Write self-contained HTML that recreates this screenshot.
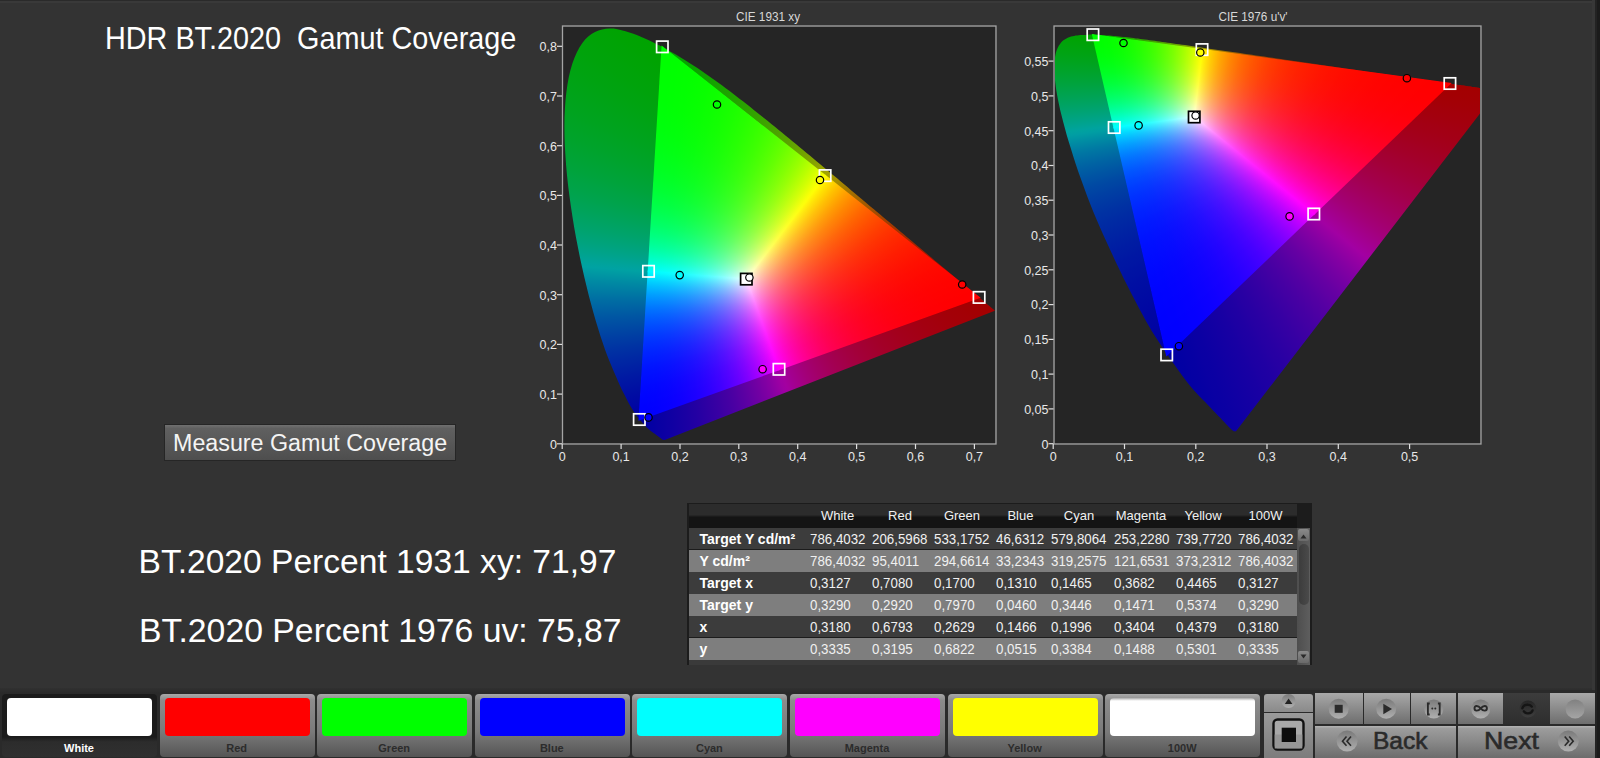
<!DOCTYPE html>
<html><head><meta charset="utf-8"><style>
html,body{margin:0;padding:0;}
body{width:1600px;height:758px;overflow:hidden;background:#333;position:relative;font-family:"Liberation Sans", sans-serif;}
.t{position:absolute;white-space:nowrap;line-height:1;}
.plot{position:absolute;overflow:hidden;background:#252525;}
.ly{position:absolute;left:0;top:0;right:0;bottom:0;}
.sb{background-blend-mode:screen;}
.ov{position:absolute;left:0;top:0;}
.btn{position:absolute;left:163.5px;top:423.5px;width:292px;height:37px;background:linear-gradient(#707070 0,#606060 10%,#585858 50%,#4e4e4e 100%);border:1px solid #262626;box-sizing:border-box;}
.tbl{position:absolute;left:687px;top:503px;width:625px;height:162px;background:#1c1c1c;}
.thead{position:absolute;left:689px;top:504px;width:608px;height:24px;background:linear-gradient(#2c2c2c 0,#2c2c2c 45%,#141414 55%,#141414 100%);}
.row{position:absolute;left:689px;width:608px;}
.sbar{position:absolute;left:1297px;top:528px;width:13px;height:137px;background:linear-gradient(90deg,#4e4e4e,#5e5e5e);}
.sbtn{position:absolute;left:1298px;width:11px;height:12px;border-radius:2px;background:linear-gradient(#8a8a8a,#6a6a6a);}
.sthumb{position:absolute;left:1298.5px;top:544px;width:10px;height:61px;background:linear-gradient(90deg,#3c3c3c,#4a4a4a);border-radius:5px;}
.sarr{position:absolute;left:1297px;width:13px;font-size:8px;color:#888;text-align:center;line-height:8px;}
.tile{position:absolute;top:694px;width:155px;height:63px;border-radius:4px;background:linear-gradient(#a8a8a8 0,#8c8c8c 10%,#7a7a7a 60%,#555 100%);}
.tile.sel{background:linear-gradient(#1b1b1b 0,#1b1b1b 68%,#2c2c2c 76%,#303030 100%);}
.sw{position:absolute;left:5px;top:4px;right:5px;height:38px;border-radius:4px;}
.cb,.cbg{position:absolute;}
</style></head><body>
<div class="cb" style="left:0;top:688px;width:1600px;height:70px;background:linear-gradient(#303030,#2a2a2a 5px,#2a2a2a)"></div>
<div class="plot" style="left:563px;top:27px;width:432px;height:416px">
<div class="ly" style="clip-path:polygon(77.5px 393.4px,76.1px 391.7px,74.1px 389.2px,72.3px 386.7px,70.7px 384.4px,69.3px 382.3px,67.9px 380.1px,66.6px 377.8px,65.2px 375.2px,63.7px 372.3px,62.1px 369.1px,60.4px 365.8px,58.6px 362.2px,56.8px 358.3px,54.9px 354.1px,53px 349.6px,50.9px 344.7px,48.7px 339.6px,46.5px 334.2px,44.2px 328.4px,41.9px 322.3px,39.7px 315.8px,37.4px 308.9px,35.1px 301.6px,32.8px 294px,30.5px 286px,28.2px 277.6px,25.9px 269px,23.7px 260px,21.4px 250.6px,19.2px 240.8px,17px 230.8px,15px 220.7px,13px 210.6px,11.2px 200.4px,9.5px 190px,7.9px 179.4px,6.4px 168.8px,5.1px 158.4px,4px 148.2px,3.1px 138.2px,2.4px 128.3px,1.8px 118.4px,1.5px 108.8px,1.4px 99.5px,1.5px 90.5px,1.9px 81.8px,2.5px 73.3px,3.4px 65.1px,4.5px 57.3px,5.8px 50px,7.4px 43.2px,9.3px 36.8px,11.4px 31px,13.8px 25.5px,16.4px 20.6px,19.2px 16.3px,22.1px 12.5px,25.2px 9.4px,28.5px 6.9px,32px 4.9px,35.6px 3.5px,39.2px 2.4px,42.9px 1.7px,46.7px 1.4px,50.6px 1.6px,54.5px 2.2px,58.5px 3.2px,62.5px 4.3px,66.4px 5.4px,70.4px 6.7px,74.4px 8.3px,78.4px 10px,82.4px 11.8px,86.4px 13.6px,90.3px 15.5px,94.1px 17.4px,97.9px 19.3px,100.5px 20.7px);background:conic-gradient(from 248.56deg at 416.1px 270.5px,#0000a3 0.00deg,#0000a3 0.68deg,#0000a3 1.36deg,#0001a3 2.04deg,#0002a3 2.72deg,#0004a3 3.41deg,#0007a3 4.09deg,#0009a3 4.77deg,#000ba3 5.45deg,#000ea3 6.13deg,#0011a3 6.81deg,#0014a3 7.49deg,#0017a3 8.17deg,#001aa3 8.86deg,#001ea3 9.54deg,#0021a3 10.22deg,#0025a3 10.90deg,#0028a3 11.58deg,#002ca3 12.26deg,#0030a3 12.94deg,#0034a3 13.62deg,#0039a3 14.30deg,#003da3 14.99deg,#0042a3 15.67deg,#0047a3 16.35deg,#004ca3 17.03deg,#0051a3 17.71deg,#0056a3 18.39deg,#005ca3 19.07deg,#0062a3 19.75deg,#0068a3 20.44deg,#006ea3 21.12deg,#0075a3 21.80deg,#007ca3 22.48deg,#0083a3 23.16deg,#008aa3 23.84deg,#0092a3 24.52deg,#009aa3 25.20deg,#00a2a3 25.89deg,#00a39c 26.57deg,#00a394 27.25deg,#00a38c 27.93deg,#00a385 28.61deg,#00a37e 29.29deg,#00a378 29.97deg,#00a372 30.65deg,#00a36c 31.33deg,#00a367 32.02deg,#00a362 32.70deg,#00a35d 33.38deg,#00a358 34.06deg,#00a354 34.74deg,#00a34f 35.42deg,#00a34b 36.10deg,#00a347 36.78deg,#00a344 37.47deg,#00a340 38.15deg,#00a33c 38.83deg,#00a339 39.51deg,#00a336 40.19deg,#00a333 40.87deg,#00a330 41.55deg,#00a32d 42.23deg,#00a32a 42.91deg,#00a328 43.60deg,#00a325 44.28deg,#00a323 44.96deg,#00a320 45.64deg,#00a31e 46.32deg,#00a31c 47.00deg,#00a31a 47.68deg,#00a318 48.36deg,#00a316 49.05deg,#00a314 49.73deg,#00a312 50.41deg,#00a310 51.09deg,#00a30f 51.77deg,#00a30d 52.45deg,#00a30b 53.13deg,#00a30a 53.81deg,#00a309 54.50deg,#00a307 55.18deg,#00a306 55.86deg,#00a305 56.54deg,#00a303 57.22deg,#00a302 57.90deg,#00a301 58.58deg,#00a300 59.26deg,#00a300 59.94deg,#00a300 60.63deg,#00a300 61.31deg)"></div>
<div class="ly" style="clip-path:polygon(94.2px 17.4px,97.9px 19.3px,101.7px 21.3px,105.4px 23.4px,109.1px 25.5px,112.8px 27.6px,116.4px 29.7px,120.1px 31.9px,123.7px 34.2px,127.2px 36.4px,130.8px 38.8px,134.4px 41.1px,138px 43.5px,141.5px 45.9px,145.1px 48.4px,148.6px 50.9px,152.2px 53.4px,155.7px 56px,159.2px 58.6px,162.7px 61.2px,166.3px 63.8px,169.8px 66.5px,173.3px 69.2px,176.8px 71.9px,180.3px 74.6px,183.8px 77.3px,187.3px 80.1px,190.8px 82.9px,194.3px 85.7px,197.8px 88.5px,201.3px 91.3px,204.8px 94.1px,208.3px 96.9px,211.9px 99.8px,215.4px 102.7px,218.9px 105.5px,222.4px 108.4px,225.9px 111.3px,229.4px 114.2px,232.9px 117.1px,236.4px 120px,239.8px 122.8px,243.3px 125.7px,246.8px 128.6px,250.3px 131.5px,253.8px 134.4px,257.2px 137.3px,260.7px 140.2px,264.1px 143px,267.5px 145.9px,271px 148.8px,274.4px 151.6px,277.8px 154.5px,281.1px 157.3px,284.5px 160.1px,287.8px 162.9px,291.1px 165.7px,294.4px 168.5px,297.7px 171.2px,301px 173.9px,304.2px 176.7px,307.4px 179.4px,310.6px 182px,313.8px 184.7px,316.9px 187.3px,320px 189.9px,323px 192.5px,326.1px 195px,329.1px 197.6px,332.1px 200px,335px 202.5px,337.9px 204.9px,340.7px 207.3px,343.5px 209.7px,346.3px 212px,349px 214.3px,351.6px 216.5px,354.2px 218.7px,356.7px 220.8px,359.1px 222.8px,361.5px 224.8px,363.9px 226.8px,366.1px 228.7px,368.4px 230.6px,370.6px 232.4px,372.7px 234.2px,374.9px 236px,376.9px 237.7px,378.9px 239.4px,380.9px 241px,382.7px 242.6px,384.5px 244.1px,386.3px 245.6px,388px 247px,389.6px 248.3px,391.2px 249.7px,392.8px 251px,394.2px 252.2px,395.7px 253.4px,397px 254.6px,398.4px 255.7px,399.6px 256.8px,400.9px 257.8px,402.1px 258.8px,403.2px 259.8px,404.3px 260.7px,405.3px 261.6px,406.4px 262.4px,407.3px 263.2px,408.3px 264px,409.2px 264.8px,410.1px 265.5px,410.9px 266.2px,411.7px 266.9px,412.5px 267.5px,413.3px 268.2px,414px 268.8px,414.7px 269.4px,415.3px 270px,416px 270.5px,416.7px 271.1px,417.3px 271.6px,417.9px 272.1px,418.5px 272.6px,419.1px 273.1px,419.6px 273.5px,420.1px 274px,420.7px 274.4px,421.2px 274.8px,421.6px 275.3px,422.1px 275.6px,422.5px 276px,423px 276.4px,423.4px 276.7px,423.8px 277px,424.2px 277.4px,424.6px 277.7px,424.9px 278px,425.2px 278.2px,425.5px 278.5px,425.8px 278.7px,426.1px 278.9px,426.3px 279.2px,426.7px 279.4px,427px 279.7px,427.4px 280.1px,427.8px 280.4px,428.2px 280.8px,428.6px 281.1px,429px 281.4px,429.4px 281.7px,429.8px 282px,430.1px 282.4px,430.5px 282.6px,430.8px 282.9px,431px 283.1px,431.2px 283.3px,431.4px 283.4px,431.5px 283.5px,431.6px 283.6px,431.7px 283.7px,431.8px 283.8px,431.2px 284px);background:conic-gradient(from 1.23deg at 76.3px 392.6px,#00a300 0.00deg,#00a300 0.81deg,#00a300 1.63deg,#00a300 2.44deg,#01a300 3.26deg,#03a300 4.07deg,#04a300 4.88deg,#06a300 5.70deg,#08a300 6.51deg,#0aa300 7.33deg,#0ca300 8.14deg,#0ea300 8.95deg,#10a300 9.77deg,#13a300 10.58deg,#15a300 11.40deg,#18a300 12.21deg,#1aa300 13.02deg,#1da300 13.84deg,#20a300 14.65deg,#23a300 15.47deg,#26a300 16.28deg,#29a300 17.09deg,#2ca300 17.91deg,#30a300 18.72deg,#33a300 19.54deg,#37a300 20.35deg,#3ba300 21.16deg,#3fa300 21.98deg,#43a300 22.79deg,#47a300 23.61deg,#4ba300 24.42deg,#50a300 25.23deg,#55a300 26.05deg,#59a300 26.86deg,#5fa300 27.68deg,#64a300 28.49deg,#69a300 29.30deg,#6fa300 30.12deg,#75a300 30.93deg,#7ca300 31.75deg,#82a300 32.56deg,#89a300 33.37deg,#91a300 34.19deg,#98a300 35.00deg,#a1a300 35.82deg,#a39e00 36.63deg,#a39600 37.44deg,#a38e00 38.26deg,#a38700 39.07deg,#a38000 39.89deg,#a37900 40.70deg,#a37300 41.51deg,#a36d00 42.33deg,#a36700 43.14deg,#a36200 43.96deg,#a35c00 44.77deg,#a35700 45.58deg,#a35200 46.40deg,#a34e00 47.21deg,#a34900 48.03deg,#a34500 48.84deg,#a34000 49.65deg,#a33c00 50.47deg,#a33800 51.28deg,#a33500 52.10deg,#a33100 52.91deg,#a32d00 53.72deg,#a32a00 54.54deg,#a32700 55.35deg,#a32400 56.17deg,#a32100 56.98deg,#a31e00 57.79deg,#a31b00 58.61deg,#a31800 59.42deg,#a31500 60.24deg,#a31300 61.05deg,#a31000 61.86deg,#a30e00 62.68deg,#a30c00 63.49deg,#a30a00 64.31deg,#a30800 65.12deg,#a30600 65.93deg,#a30400 66.75deg,#a30200 67.56deg,#a30100 68.38deg,#a30000 69.19deg,#a30000 70.00deg,#a30000 70.82deg,#a30000 71.63deg,#a30000 72.45deg,#a30000 73.26deg)"></div>
<div class="ly" style="clip-path:polygon(101.7px 412.9px,101.7px 412.9px,101.7px 412.9px,101.6px 412.9px,101.6px 413px,101.6px 413px,101.5px 413px,101.5px 413px,101.4px 413px,101.4px 413px,101.4px 413px,101.3px 413px,101.2px 413px,101.2px 413px,101.1px 413px,101.1px 413px,101px 413px,100.9px 413px,100.8px 413px,100.7px 413px,100.6px 413px,100.5px 413px,100.4px 413px,100.3px 412.9px,100.1px 412.9px,99.9px 412.8px,99.7px 412.7px,99.5px 412.5px,99.3px 412.4px,99px 412.2px,98.6px 412px,98.3px 411.7px,97.9px 411.4px,97.5px 411.1px,97.1px 410.8px,96.6px 410.4px,96px 410px,95.4px 409.5px,94.7px 409.1px,94px 408.6px,93.2px 408px,92.4px 407.3px,91.4px 406.6px,90.4px 405.9px,89.3px 405.1px,88.1px 404.3px,86.9px 403.3px,85.5px 402.1px,84px 400.7px,82.2px 398.8px,80.3px 396.6px,78.2px 394.2px,76.1px 391.7px,75.9px 391.5px,415px 269.6px,415.3px 270px,416px 270.5px,416.7px 271.1px,417.3px 271.6px,417.9px 272.1px,418.5px 272.6px,419.1px 273.1px,419.6px 273.5px,420.1px 274px,420.7px 274.4px,421.2px 274.8px,421.6px 275.3px,422.1px 275.6px,422.5px 276px,423px 276.4px,423.4px 276.7px,423.8px 277px,424.2px 277.4px,424.6px 277.7px,424.9px 278px,425.2px 278.2px,425.5px 278.5px,425.8px 278.7px,426.1px 278.9px,426.3px 279.2px,426.7px 279.4px,427px 279.7px,427.4px 280.1px,427.8px 280.4px,428.2px 280.8px,428.6px 281.1px,429px 281.4px,429.4px 281.7px,429.8px 282px,430.1px 282.4px,430.5px 282.6px,430.8px 282.9px,431px 283.1px,431.2px 283.3px,431.4px 283.4px,431.5px 283.5px,431.6px 283.6px,431.7px 283.7px,431.8px 283.8px);background:conic-gradient(from 126.84deg at 99.3px 19.9px,#a30000 0.00deg,#a30000 0.65deg,#a30000 1.29deg,#a30000 1.94deg,#a30001 2.59deg,#a30002 3.24deg,#a30003 3.88deg,#a30005 4.53deg,#a30006 5.18deg,#a30007 5.83deg,#a30008 6.47deg,#a3000a 7.12deg,#a3000b 7.77deg,#a3000d 8.42deg,#a3000f 9.06deg,#a30010 9.71deg,#a30012 10.36deg,#a30014 11.00deg,#a30016 11.65deg,#a30018 12.30deg,#a3001a 12.95deg,#a3001c 13.59deg,#a3001e 14.24deg,#a30021 14.89deg,#a30023 15.54deg,#a30026 16.18deg,#a30028 16.83deg,#a3002b 17.48deg,#a3002e 18.12deg,#a30031 18.77deg,#a30034 19.42deg,#a30037 20.07deg,#a3003a 20.71deg,#a3003e 21.36deg,#a30041 22.01deg,#a30045 22.66deg,#a30049 23.30deg,#a3004d 23.95deg,#a30051 24.60deg,#a30055 25.25deg,#a3005a 25.89deg,#a3005f 26.54deg,#a30064 27.19deg,#a30069 27.83deg,#a3006f 28.48deg,#a30075 29.13deg,#a3007b 29.78deg,#a30082 30.42deg,#a30089 31.07deg,#a30090 31.72deg,#a30098 32.37deg,#a300a0 33.01deg,#9e00a3 33.66deg,#9600a3 34.31deg,#8e00a3 34.95deg,#8600a3 35.60deg,#7f00a3 36.25deg,#7800a3 36.90deg,#7100a3 37.54deg,#6b00a3 38.19deg,#6500a3 38.84deg,#5f00a3 39.49deg,#5900a3 40.13deg,#5400a3 40.78deg,#4e00a3 41.43deg,#4900a3 42.08deg,#4400a3 42.72deg,#4000a3 43.37deg,#3b00a3 44.02deg,#3700a3 44.66deg,#3300a3 45.31deg,#2f00a3 45.96deg,#2b00a3 46.61deg,#2700a3 47.25deg,#2300a3 47.90deg,#2000a3 48.55deg,#1c00a3 49.20deg,#1900a3 49.84deg,#1600a3 50.49deg,#1300a3 51.14deg,#1000a3 51.78deg,#0e00a3 52.43deg,#0b00a3 53.08deg,#0900a3 53.73deg,#0600a3 54.37deg,#0400a3 55.02deg,#0200a3 55.67deg,#0100a3 56.32deg,#0000a3 56.96deg,#0000a3 57.61deg,#0000a3 58.26deg)"></div>
<div class="ly" style="clip-path:polygon(99.3px 19.9px,416.1px 270.5px,76.3px 392.6px);background:#e8e8e8"></div>
<div class="ly sb" style="clip-path:polygon(182.4px 252px,262px 147.6px,417.7px 270.8px,215.5px 343.4px);background:conic-gradient(from 35.54deg at 76.3px 392.6px,#00ff00 0.00deg,#00ff00 0.51deg,#00ff00 1.01deg,#00ff00 1.52deg,#00f900 2.03deg,#00ed00 2.54deg,#00e200 3.04deg,#00d800 3.55deg,#00ce00 4.06deg,#00c400 4.56deg,#00bb00 5.07deg,#00b300 5.58deg,#00aa00 6.08deg,#00a200 6.59deg,#009a00 7.10deg,#009300 7.61deg,#008c00 8.11deg,#008500 8.62deg,#007f00 9.13deg,#007900 9.63deg,#007300 10.14deg,#006d00 10.65deg,#006700 11.15deg,#006200 11.66deg,#005d00 12.17deg,#005800 12.68deg,#005400 13.18deg,#004f00 13.69deg,#004b00 14.20deg,#004700 14.70deg,#004300 15.21deg,#003f00 15.72deg,#003b00 16.22deg,#003800 16.73deg,#003400 17.24deg,#003100 17.75deg,#002e00 18.25deg,#002b00 18.76deg,#002800 19.27deg,#002600 19.77deg,#002300 20.28deg,#002100 20.79deg,#001e00 21.29deg,#001c00 21.80deg,#001a00 22.31deg,#001800 22.82deg,#001600 23.32deg,#001400 23.83deg,#001200 24.34deg,#001000 24.84deg,#000f00 25.35deg,#000d00 25.86deg,#000c00 26.36deg,#000b00 26.87deg,#000900 27.38deg,#000800 27.89deg,#000700 28.39deg,#000600 28.90deg,#000500 29.41deg,#000400 29.91deg,#000300 30.42deg,#000300 30.93deg,#000200 31.44deg,#000200 31.94deg,#000100 32.45deg,#000100 32.96deg,#000000 33.46deg,#000000 33.97deg,#000000 34.48deg,#000000 34.98deg,#000000 35.49deg,#000000 36.00deg,#000000 36.51deg),conic-gradient(from 126.62deg at 99.3px 19.9px,#000000 0.00deg,#000000 0.49deg,#000000 0.98deg,#000000 1.47deg,#000000 1.95deg,#000000 2.44deg,#000000 2.93deg,#000000 3.42deg,#000001 3.91deg,#000001 4.40deg,#000001 4.88deg,#000002 5.37deg,#000002 5.86deg,#000003 6.35deg,#000004 6.84deg,#000004 7.33deg,#000005 7.82deg,#000006 8.30deg,#000007 8.79deg,#000008 9.28deg,#000009 9.77deg,#00000a 10.26deg,#00000b 10.75deg,#00000c 11.24deg,#00000d 11.72deg,#00000f 12.21deg,#000010 12.70deg,#000012 13.19deg,#000013 13.68deg,#000015 14.17deg,#000017 14.65deg,#000019 15.14deg,#00001b 15.63deg,#00001d 16.12deg,#00001f 16.61deg,#000021 17.10deg,#000024 17.59deg,#000026 18.07deg,#000029 18.56deg,#00002c 19.05deg,#00002f 19.54deg,#000032 20.03deg,#000036 20.52deg,#000039 21.01deg,#00003d 21.49deg,#000041 21.98deg,#000045 22.47deg,#000049 22.96deg,#00004e 23.45deg,#000052 23.94deg,#000057 24.42deg,#00005d 24.91deg,#000062 25.40deg,#000068 25.89deg,#00006f 26.38deg,#000075 26.87deg,#00007c 27.36deg,#000083 27.84deg,#00008b 28.33deg,#000093 28.82deg,#00009c 29.31deg,#0000a5 29.80deg,#0000af 30.29deg,#0000b9 30.77deg,#0000c4 31.26deg,#0000d0 31.75deg,#0000dc 32.24deg,#0000e9 32.73deg,#0000f7 33.22deg,#0000ff 33.71deg,#0000ff 34.19deg,#0000ff 34.68deg,#0000ff 35.17deg);background-color:#ff0000"></div>
<div class="ly sb" style="clip-path:polygon(183.7px 253px,84.6px 245.2px,98.6px 18.4px,263.2px 148.6px);background:conic-gradient(from 1.72deg at 76.3px 392.6px,#000000 0.00deg,#000000 0.52deg,#000000 1.04deg,#000000 1.56deg,#000000 2.07deg,#000000 2.59deg,#000000 3.11deg,#010000 3.63deg,#010000 4.15deg,#020000 4.67deg,#020000 5.19deg,#030000 5.71deg,#030000 6.22deg,#040000 6.74deg,#050000 7.26deg,#060000 7.78deg,#070000 8.30deg,#080000 8.82deg,#090000 9.34deg,#0a0000 9.86deg,#0c0000 10.37deg,#0d0000 10.89deg,#0e0000 11.41deg,#100000 11.93deg,#120000 12.45deg,#130000 12.97deg,#150000 13.49deg,#170000 14.01deg,#190000 14.52deg,#1b0000 15.04deg,#1d0000 15.56deg,#200000 16.08deg,#220000 16.60deg,#250000 17.12deg,#270000 17.64deg,#2a0000 18.15deg,#2d0000 18.67deg,#300000 19.19deg,#330000 19.71deg,#360000 20.23deg,#3a0000 20.75deg,#3d0000 21.27deg,#410000 21.79deg,#450000 22.30deg,#490000 22.82deg,#4d0000 23.34deg,#520000 23.86deg,#560000 24.38deg,#5b0000 24.90deg,#600000 25.42deg,#650000 25.94deg,#6b0000 26.45deg,#710000 26.97deg,#770000 27.49deg,#7d0000 28.01deg,#830000 28.53deg,#8a0000 29.05deg,#910000 29.57deg,#980000 30.09deg,#a00000 30.60deg,#a80000 31.12deg,#b10000 31.64deg,#b90000 32.16deg,#c30000 32.68deg,#cc0000 33.20deg,#d60000 33.72deg,#e10000 34.23deg,#ec0000 34.75deg,#f80000 35.27deg,#ff0000 35.79deg,#ff0000 36.31deg,#ff0000 36.83deg,#ff0000 37.35deg),conic-gradient(from 272.81deg at 416.1px 270.5px,#0000ff 0.00deg,#0000ff 0.52deg,#0000ff 1.04deg,#0000ff 1.55deg,#0000f4 2.07deg,#0000e7 2.59deg,#0000da 3.11deg,#0000cd 3.62deg,#0000c2 4.14deg,#0000b7 4.66deg,#0000ad 5.18deg,#0000a3 5.69deg,#00009a 6.21deg,#000092 6.73deg,#00008a 7.25deg,#000082 7.76deg,#00007b 8.28deg,#000074 8.80deg,#00006e 9.32deg,#000067 9.83deg,#000062 10.35deg,#00005c 10.87deg,#000057 11.39deg,#000052 11.90deg,#00004d 12.42deg,#000049 12.94deg,#000044 13.46deg,#000040 13.97deg,#00003d 14.49deg,#000039 15.01deg,#000035 15.53deg,#000032 16.05deg,#00002f 16.56deg,#00002c 17.08deg,#000029 17.60deg,#000026 18.12deg,#000024 18.63deg,#000021 19.15deg,#00001f 19.67deg,#00001d 20.19deg,#00001b 20.70deg,#000019 21.22deg,#000017 21.74deg,#000015 22.26deg,#000013 22.77deg,#000012 23.29deg,#000010 23.81deg,#00000f 24.33deg,#00000d 24.84deg,#00000c 25.36deg,#00000b 25.88deg,#00000a 26.40deg,#000009 26.91deg,#000008 27.43deg,#000007 27.95deg,#000006 28.47deg,#000005 28.98deg,#000004 29.50deg,#000004 30.02deg,#000003 30.54deg,#000003 31.06deg,#000002 31.57deg,#000002 32.09deg,#000001 32.61deg,#000001 33.13deg,#000001 33.64deg,#000000 34.16deg,#000000 34.68deg,#000000 35.20deg,#000000 35.71deg,#000000 36.23deg,#000000 36.75deg,#000000 37.27deg);background-color:#00ff00"></div>
<div class="ly sb" style="clip-path:polygon(183.9px 251.4px,217px 342.9px,75.5px 393.7px,84.7px 243.6px);background:conic-gradient(from 158.42deg at 99.3px 19.9px,#ff0000 0.00deg,#ff0000 0.37deg,#ff0000 0.74deg,#ff0000 1.12deg,#ff0000 1.49deg,#fa0000 1.86deg,#ef0000 2.23deg,#e40000 2.61deg,#da0000 2.98deg,#d00000 3.35deg,#c70000 3.72deg,#be0000 4.10deg,#b50000 4.47deg,#ad0000 4.84deg,#a50000 5.21deg,#9d0000 5.58deg,#960000 5.96deg,#8f0000 6.33deg,#880000 6.70deg,#810000 7.07deg,#7b0000 7.45deg,#750000 7.82deg,#6f0000 8.19deg,#690000 8.56deg,#640000 8.94deg,#5f0000 9.31deg,#5a0000 9.68deg,#550000 10.05deg,#500000 10.43deg,#4c0000 10.80deg,#480000 11.17deg,#430000 11.54deg,#3f0000 11.91deg,#3c0000 12.29deg,#380000 12.66deg,#350000 13.03deg,#310000 13.40deg,#2e0000 13.78deg,#2b0000 14.15deg,#280000 14.52deg,#250000 14.89deg,#220000 15.27deg,#200000 15.64deg,#1d0000 16.01deg,#1b0000 16.38deg,#190000 16.75deg,#170000 17.13deg,#150000 17.50deg,#130000 17.87deg,#110000 18.24deg,#0f0000 18.62deg,#0e0000 18.99deg,#0c0000 19.36deg,#0b0000 19.73deg,#090000 20.11deg,#080000 20.48deg,#070000 20.85deg,#060000 21.22deg,#050000 21.60deg,#040000 21.97deg,#030000 22.34deg,#020000 22.71deg,#020000 23.08deg,#010000 23.46deg,#010000 23.83deg,#000000 24.20deg,#000000 24.57deg,#000000 24.95deg,#000000 25.32deg,#000000 25.69deg,#000000 26.06deg,#000000 26.44deg,#000000 26.81deg),conic-gradient(from 248.52deg at 416.1px 270.5px,#000000 0.00deg,#000000 0.38deg,#000000 0.77deg,#000000 1.15deg,#000000 1.54deg,#000000 1.92deg,#000000 2.31deg,#000000 2.69deg,#000100 3.08deg,#000100 3.46deg,#000200 3.85deg,#000300 4.23deg,#000300 4.61deg,#000400 5.00deg,#000500 5.38deg,#000600 5.77deg,#000700 6.15deg,#000800 6.54deg,#000a00 6.92deg,#000b00 7.31deg,#000d00 7.69deg,#000e00 8.08deg,#001000 8.46deg,#001100 8.84deg,#001300 9.23deg,#001500 9.61deg,#001700 10.00deg,#001a00 10.38deg,#001c00 10.77deg,#001e00 11.15deg,#002100 11.54deg,#002300 11.92deg,#002600 12.31deg,#002900 12.69deg,#002c00 13.07deg,#002f00 13.46deg,#003200 13.84deg,#003600 14.23deg,#003900 14.61deg,#003d00 15.00deg,#004100 15.38deg,#004500 15.77deg,#004900 16.15deg,#004d00 16.53deg,#005200 16.92deg,#005600 17.30deg,#005b00 17.69deg,#006000 18.07deg,#006500 18.46deg,#006b00 18.84deg,#007000 19.23deg,#007600 19.61deg,#007c00 20.00deg,#008300 20.38deg,#008900 20.76deg,#009000 21.15deg,#009700 21.53deg,#009e00 21.92deg,#00a600 22.30deg,#00ae00 22.69deg,#00b600 23.07deg,#00be00 23.46deg,#00c700 23.84deg,#00d000 24.23deg,#00da00 24.61deg,#00e400 24.99deg,#00ee00 25.38deg,#00f900 25.76deg,#00ff00 26.15deg,#00ff00 26.53deg,#00ff00 26.92deg,#00ff00 27.30deg,#00ff00 27.69deg);background-color:#0000ff"></div>
</div>
<div class="t" style="left:768.0px;top:11.2px;font-size:12.5px;color:#d8d8d8;font-weight:normal;transform:translateX(-50%) scaleX(0.94);transform-origin:center;">CIE 1931 xy</div>
<div class="plot" style="left:1055px;top:27px;width:425px;height:416px">
<div class="ly" style="clip-path:polygon(113.2px 328.9px,110.6px 325.2px,105.5px 317.6px,100.9px 310.5px,96.9px 304.2px,93.4px 298.3px,90.1px 292.5px,86.9px 286.6px,83.5px 280.3px,80px 273.4px,76.2px 266.2px,72.4px 258.8px,68.6px 251.2px,64.9px 243.5px,61px 235.5px,57.2px 227.3px,53.4px 219px,49.6px 210.7px,45.9px 202.4px,42.2px 194.1px,38.7px 185.7px,35.4px 177.4px,32.1px 169px,29.1px 160.8px,26.1px 152.6px,23.3px 144.7px,20.7px 137px,18.3px 129.4px,16px 122.1px,13.8px 114.9px,11.7px 107.9px,9.9px 101.3px,8.2px 95px,6.7px 89px,5.3px 83.4px,4.1px 78px,3px 72.8px,2.1px 67.9px,1.3px 63.3px,0.7px 59px,0.2px 55px,-0.2px 51.2px,-0.5px 47.6px,-0.7px 44.2px,-0.8px 41.1px,-0.8px 38.1px,-0.6px 35.3px,-0.4px 32.7px,-0px 30.2px,0.4px 27.9px,0.9px 25.7px,1.5px 23.8px,2.2px 21.9px,3px 20.2px,3.9px 18.6px,4.9px 17.2px,5.9px 15.8px,7px 14.6px,8.1px 13.6px,9.3px 12.7px,10.6px 11.9px,11.9px 11.2px,13.3px 10.5px,14.7px 10px,16.1px 9.5px,17.6px 9.2px,19.1px 8.9px,20.7px 8.6px,22.3px 8.4px,23.9px 8.3px,25.5px 8.1px,27.1px 8px,28.8px 7.9px,30.5px 7.9px,32.2px 7.9px,33.9px 7.8px,35.6px 7.8px,37.2px 7.8px,38.9px 7.9px,39.1px 7.9px);background:conic-gradient(from 224.49deg at 394.9px 56.6px,#0000a3 0.00deg,#0000a3 0.61deg,#0000a3 1.22deg,#0000a3 1.83deg,#0000a3 2.44deg,#0001a3 3.05deg,#0001a3 3.65deg,#0002a3 4.26deg,#0003a3 4.87deg,#0003a3 5.48deg,#0004a3 6.09deg,#0005a3 6.70deg,#0006a3 7.31deg,#0006a3 7.92deg,#0007a3 8.53deg,#0008a3 9.14deg,#0009a3 9.75deg,#000aa3 10.35deg,#000ba3 10.96deg,#000ca3 11.57deg,#000da3 12.18deg,#000ea3 12.79deg,#000fa3 13.40deg,#0011a3 14.01deg,#0012a3 14.62deg,#0013a3 15.23deg,#0015a3 15.84deg,#0016a3 16.45deg,#0017a3 17.05deg,#0019a3 17.66deg,#001ba3 18.27deg,#001ca3 18.88deg,#001ea3 19.49deg,#0020a3 20.10deg,#0022a3 20.71deg,#0024a3 21.32deg,#0026a3 21.93deg,#0028a3 22.54deg,#002aa3 23.15deg,#002ca3 23.75deg,#002fa3 24.36deg,#0031a3 24.97deg,#0034a3 25.58deg,#0037a3 26.19deg,#003aa3 26.80deg,#003da3 27.41deg,#0040a3 28.02deg,#0044a3 28.63deg,#0047a3 29.24deg,#004ba3 29.85deg,#0050a3 30.45deg,#0054a3 31.06deg,#0059a3 31.67deg,#005ea3 32.28deg,#0063a3 32.89deg,#0069a3 33.50deg,#006fa3 34.11deg,#0075a3 34.72deg,#007ca3 35.33deg,#0084a3 35.94deg,#008ca3 36.55deg,#0095a3 37.15deg,#009ea3 37.76deg,#00a39e 38.37deg,#00a394 38.98deg,#00a38a 39.59deg,#00a381 40.20deg,#00a378 40.81deg,#00a36f 41.42deg,#00a367 42.03deg,#00a35f 42.64deg,#00a357 43.25deg,#00a350 43.85deg,#00a349 44.46deg,#00a342 45.07deg,#00a33b 45.68deg,#00a335 46.29deg,#00a32f 46.90deg,#00a329 47.51deg,#00a324 48.12deg,#00a31e 48.73deg,#00a319 49.34deg,#00a314 49.94deg,#00a310 50.55deg,#00a30c 51.16deg,#00a308 51.77deg,#00a304 52.38deg,#00a301 52.99deg,#00a300 53.60deg,#00a300 54.21deg,#00a300 54.82deg)"></div>
<div class="ly" style="clip-path:polygon(29.7px 7.9px,30.5px 7.9px,32.2px 7.9px,33.9px 7.8px,35.6px 7.8px,37.2px 7.8px,38.9px 7.9px,40.6px 7.9px,42.3px 7.9px,44.1px 8px,45.8px 8.1px,47.5px 8.2px,49.3px 8.3px,51.1px 8.4px,52.9px 8.5px,54.7px 8.6px,56.5px 8.8px,58.4px 8.9px,60.3px 9.1px,62.2px 9.3px,64.1px 9.5px,66.1px 9.7px,68.1px 9.9px,70.1px 10.1px,72.2px 10.3px,74.3px 10.6px,76.4px 10.8px,78.5px 11.1px,80.7px 11.4px,82.9px 11.6px,85.2px 11.9px,87.5px 12.2px,89.8px 12.5px,92.2px 12.8px,94.6px 13.2px,97.1px 13.5px,99.6px 13.8px,102.1px 14.2px,104.7px 14.5px,107.3px 14.9px,110px 15.3px,112.7px 15.7px,115.5px 16px,118.3px 16.4px,121.2px 16.9px,124.1px 17.3px,127px 17.7px,130px 18.1px,133.1px 18.6px,136.2px 19px,139.4px 19.5px,142.6px 19.9px,145.9px 20.4px,149.2px 20.9px,152.6px 21.4px,156px 21.9px,159.5px 22.4px,163px 22.9px,166.6px 23.4px,170.2px 23.9px,173.9px 24.5px,177.6px 25px,181.4px 25.6px,185.2px 26.1px,189.1px 26.7px,193px 27.3px,197px 27.8px,201px 28.4px,205.1px 29px,209.2px 29.6px,213.3px 30.2px,217.5px 30.8px,221.7px 31.4px,226px 32px,230.2px 32.7px,234.5px 33.3px,238.8px 33.9px,243.2px 34.6px,247.5px 35.2px,251.9px 35.8px,256.2px 36.5px,260.6px 37.1px,264.8px 37.7px,269.1px 38.3px,273.3px 39px,277.5px 39.6px,281.6px 40.2px,285.8px 40.8px,290px 41.4px,294.1px 42px,298.3px 42.6px,302.4px 43.2px,306.4px 43.8px,310.4px 44.4px,314.3px 44.9px,318.1px 45.5px,321.8px 46px,325.5px 46.5px,329.1px 47.1px,332.6px 47.6px,336.1px 48.1px,339.5px 48.6px,342.8px 49.1px,346px 49.5px,349.2px 50px,352.3px 50.4px,355.3px 50.9px,358.2px 51.3px,361px 51.7px,363.8px 52.1px,366.4px 52.5px,369px 52.9px,371.6px 53.3px,374px 53.6px,376.4px 54px,378.6px 54.3px,380.9px 54.6px,383.1px 54.9px,385.2px 55.2px,387.2px 55.5px,389.2px 55.8px,391.1px 56.1px,393px 56.4px,394.9px 56.6px,396.7px 56.9px,398.5px 57.2px,400.2px 57.4px,401.9px 57.7px,403.5px 57.9px,405.1px 58.1px,406.7px 58.4px,408.2px 58.6px,409.7px 58.8px,411.1px 59px,412.5px 59.2px,413.8px 59.4px,415.1px 59.6px,416.3px 59.8px,417.5px 59.9px,418.6px 60.1px,419.7px 60.3px,420.8px 60.4px,421.8px 60.6px,422.7px 60.7px,423.5px 60.8px,424.3px 60.9px,425.2px 61.1px,426.2px 61.2px,427.4px 61.4px,428.6px 61.5px,429.9px 61.7px,431.2px 61.9px,432.4px 62.1px,433.6px 62.3px,434.8px 62.5px,436px 62.6px,437.2px 62.8px,438.2px 63px,439.2px 63.1px,440.1px 63.2px,440.7px 63.3px,441.3px 63.4px,441.7px 63.5px,442.1px 63.5px,442.3px 63.6px,442.6px 63.6px,442px 64.3px);background:conic-gradient(from 344.13deg at 111.7px 328px,#00a300 0.00deg,#00a300 0.76deg,#00a300 1.53deg,#00a300 2.29deg,#00a300 3.06deg,#03a300 3.82deg,#06a300 4.58deg,#0aa300 5.35deg,#0ea300 6.11deg,#12a300 6.88deg,#17a300 7.64deg,#1ca300 8.40deg,#21a300 9.17deg,#26a300 9.93deg,#2ba300 10.70deg,#31a300 11.46deg,#37a300 12.22deg,#3da300 12.99deg,#44a300 13.75deg,#4aa300 14.52deg,#52a300 15.28deg,#59a300 16.05deg,#60a300 16.81deg,#68a300 17.57deg,#71a300 18.34deg,#79a300 19.10deg,#82a300 19.87deg,#8ba300 20.63deg,#95a300 21.39deg,#9fa300 22.16deg,#a39d00 22.92deg,#a39300 23.69deg,#a38b00 24.45deg,#a38200 25.21deg,#a37b00 25.98deg,#a37400 26.74deg,#a36d00 27.51deg,#a36700 28.27deg,#a36100 29.03deg,#a35c00 29.80deg,#a35700 30.56deg,#a35200 31.33deg,#a34e00 32.09deg,#a34900 32.85deg,#a34500 33.62deg,#a34200 34.38deg,#a33e00 35.15deg,#a33b00 35.91deg,#a33700 36.67deg,#a33400 37.44deg,#a33100 38.20deg,#a32e00 38.97deg,#a32c00 39.73deg,#a32900 40.49deg,#a32700 41.26deg,#a32400 42.02deg,#a32200 42.79deg,#a32000 43.55deg,#a31e00 44.32deg,#a31c00 45.08deg,#a31a00 45.84deg,#a31800 46.61deg,#a31600 47.37deg,#a31500 48.14deg,#a31300 48.90deg,#a31100 49.66deg,#a31000 50.43deg,#a30f00 51.19deg,#a30d00 51.96deg,#a30c00 52.72deg,#a30b00 53.48deg,#a30900 54.25deg,#a30800 55.01deg,#a30700 55.78deg,#a30600 56.54deg,#a30500 57.30deg,#a30400 58.07deg,#a30300 58.83deg,#a30200 59.60deg,#a30100 60.36deg,#a30100 61.12deg,#a30000 61.89deg,#a30000 62.65deg,#a30000 63.42deg,#a30000 64.18deg,#a30000 64.94deg,#a30000 65.71deg,#a30000 66.47deg,#a30000 67.24deg,#a30000 68.00deg,#a30000 68.77deg)"></div>
<div class="ly" style="clip-path:polygon(181.2px 403.9px,181.2px 403.9px,181.2px 403.9px,181.1px 404px,181.1px 404px,181px 404.1px,181px 404.1px,180.9px 404.1px,180.8px 404.2px,180.8px 404.2px,180.7px 404.3px,180.6px 404.3px,180.5px 404.3px,180.4px 404.4px,180.2px 404.4px,180.1px 404.4px,180px 404.4px,179.8px 404.4px,179.6px 404.3px,179.4px 404.3px,179.2px 404.3px,179px 404.3px,178.8px 404.2px,178.4px 404px,178px 403.7px,177.4px 403.3px,176.9px 402.8px,176.2px 402.2px,175.5px 401.5px,174.6px 400.7px,173.6px 399.7px,172.6px 398.6px,171.4px 397.4px,170.1px 396px,168.7px 394.5px,167.2px 392.9px,165.5px 391.1px,163.6px 389.2px,161.7px 387.2px,159.6px 385.1px,157.4px 382.7px,154.9px 380.1px,152.2px 377.2px,149.4px 374.3px,146.5px 371.4px,143.4px 368.3px,140px 364.6px,136.2px 360.2px,132px 354.9px,127.1px 348.4px,121.7px 341px,116.1px 333.1px,111.5px 326.5px,393.4px 56.4px,394.9px 56.6px,396.7px 56.9px,398.5px 57.2px,400.2px 57.4px,401.9px 57.7px,403.5px 57.9px,405.1px 58.1px,406.7px 58.4px,408.2px 58.6px,409.7px 58.8px,411.1px 59px,412.5px 59.2px,413.8px 59.4px,415.1px 59.6px,416.3px 59.8px,417.5px 59.9px,418.6px 60.1px,419.7px 60.3px,420.8px 60.4px,421.8px 60.6px,422.7px 60.7px,423.5px 60.8px,424.3px 60.9px,425.2px 61.1px,426.2px 61.2px,427.4px 61.4px,428.6px 61.5px,429.9px 61.7px,431.2px 61.9px,432.4px 62.1px,433.6px 62.3px,434.8px 62.5px,436px 62.6px,437.2px 62.8px,438.2px 63px,439.2px 63.1px,440.1px 63.2px,440.7px 63.3px,441.3px 63.4px,441.7px 63.5px,442.1px 63.5px,442.3px 63.6px,442.6px 63.6px);background:conic-gradient(from 96.29deg at 37.9px 7.8px,#a30000 0.00deg,#a30000 0.80deg,#a30000 1.60deg,#a30002 2.41deg,#a30003 3.21deg,#a30005 4.01deg,#a30007 4.81deg,#a3000a 5.62deg,#a3000c 6.42deg,#a3000e 7.22deg,#a30011 8.02deg,#a30014 8.82deg,#a30016 9.63deg,#a30019 10.43deg,#a3001c 11.23deg,#a3001f 12.03deg,#a30023 12.84deg,#a30026 13.64deg,#a30029 14.44deg,#a3002d 15.24deg,#a30031 16.04deg,#a30034 16.85deg,#a30038 17.65deg,#a3003c 18.45deg,#a30041 19.25deg,#a30045 20.05deg,#a30049 20.86deg,#a3004e 21.66deg,#a30053 22.46deg,#a30058 23.26deg,#a3005d 24.07deg,#a30062 24.87deg,#a30068 25.67deg,#a3006d 26.47deg,#a30073 27.27deg,#a30079 28.08deg,#a30080 28.88deg,#a30087 29.68deg,#a3008e 30.48deg,#a30095 31.29deg,#a3009c 32.09deg,#a200a3 32.89deg,#9a00a3 33.69deg,#9300a3 34.49deg,#8c00a3 35.30deg,#8500a3 36.10deg,#7f00a3 36.90deg,#7900a3 37.70deg,#7300a3 38.51deg,#6e00a3 39.31deg,#6800a3 40.11deg,#6300a3 40.91deg,#5f00a3 41.71deg,#5a00a3 42.52deg,#5500a3 43.32deg,#5100a3 44.12deg,#4d00a3 44.92deg,#4900a3 45.72deg,#4500a3 46.53deg,#4200a3 47.33deg,#3e00a3 48.13deg,#3b00a3 48.93deg,#3700a3 49.74deg,#3400a3 50.54deg,#3100a3 51.34deg,#2e00a3 52.14deg,#2b00a3 52.94deg,#2800a3 53.75deg,#2600a3 54.55deg,#2300a3 55.35deg,#2000a3 56.15deg,#1e00a3 56.96deg,#1c00a3 57.76deg,#1900a3 58.56deg,#1700a3 59.36deg,#1500a3 60.16deg,#1300a3 60.97deg,#1100a3 61.77deg,#0f00a3 62.57deg,#0d00a3 63.37deg,#0b00a3 64.18deg,#0a00a3 64.98deg,#0800a3 65.78deg,#0600a3 66.58deg,#0500a3 67.38deg,#0300a3 68.19deg,#0200a3 68.99deg,#0100a3 69.79deg,#0000a3 70.59deg,#0000a3 71.39deg,#0000a3 72.20deg)"></div>
<div class="ly" style="clip-path:polygon(37.9px 7.8px,394.9px 56.6px,111.7px 328px);background:#e8e8e8"></div>
<div class="ly sb" style="clip-path:polygon(138.4px 90.4px,146.3px 21.8px,396.7px 56.1px,258.8px 188.2px);background:conic-gradient(from 4.90deg at 111.7px 328px,#00ff00 0.00deg,#00ff00 0.60deg,#00ff00 1.20deg,#00fc00 1.79deg,#00ea00 2.39deg,#00da00 2.99deg,#00cb00 3.59deg,#00be00 4.19deg,#00b100 4.78deg,#00a500 5.38deg,#009b00 5.98deg,#009100 6.58deg,#008700 7.18deg,#007f00 7.77deg,#007700 8.37deg,#006f00 8.97deg,#006800 9.57deg,#006200 10.17deg,#005c00 10.76deg,#005600 11.36deg,#005100 11.96deg,#004c00 12.56deg,#004700 13.15deg,#004200 13.75deg,#003e00 14.35deg,#003a00 14.95deg,#003700 15.55deg,#003300 16.14deg,#003000 16.74deg,#002d00 17.34deg,#002a00 17.94deg,#002700 18.54deg,#002500 19.13deg,#002200 19.73deg,#002000 20.33deg,#001e00 20.93deg,#001c00 21.53deg,#001a00 22.12deg,#001800 22.72deg,#001600 23.32deg,#001400 23.92deg,#001300 24.52deg,#001100 25.11deg,#001000 25.71deg,#000f00 26.31deg,#000d00 26.91deg,#000c00 27.51deg,#000b00 28.10deg,#000a00 28.70deg,#000900 29.30deg,#000800 29.90deg,#000700 30.50deg,#000700 31.09deg,#000600 31.69deg,#000500 32.29deg,#000400 32.89deg,#000400 33.48deg,#000300 34.08deg,#000300 34.68deg,#000200 35.28deg,#000200 35.88deg,#000200 36.47deg,#000100 37.07deg,#000100 37.67deg,#000100 38.27deg,#000000 38.87deg,#000000 39.46deg,#000000 40.06deg,#000000 40.66deg,#000000 41.26deg,#000000 41.86deg,#000000 42.45deg,#000000 43.05deg),conic-gradient(from 95.87deg at 37.9px 7.8px,#000000 0.00deg,#000000 0.49deg,#000000 0.97deg,#000000 1.46deg,#000000 1.95deg,#000000 2.43deg,#000000 2.92deg,#000001 3.41deg,#000001 3.90deg,#000002 4.38deg,#000002 4.87deg,#000003 5.36deg,#000004 5.84deg,#000005 6.33deg,#000006 6.82deg,#000007 7.30deg,#000008 7.79deg,#000009 8.28deg,#00000a 8.76deg,#00000c 9.25deg,#00000d 9.74deg,#00000f 10.23deg,#000010 10.71deg,#000012 11.20deg,#000014 11.69deg,#000016 12.17deg,#000018 12.66deg,#00001a 13.15deg,#00001c 13.63deg,#00001f 14.12deg,#000021 14.61deg,#000024 15.09deg,#000026 15.58deg,#000029 16.07deg,#00002c 16.56deg,#00002f 17.04deg,#000032 17.53deg,#000036 18.02deg,#000039 18.50deg,#00003d 18.99deg,#000040 19.48deg,#000044 19.96deg,#000048 20.45deg,#00004c 20.94deg,#000051 21.42deg,#000055 21.91deg,#00005a 22.40deg,#00005f 22.89deg,#000064 23.37deg,#000069 23.86deg,#00006e 24.35deg,#000074 24.83deg,#00007a 25.32deg,#000080 25.81deg,#000086 26.29deg,#00008d 26.78deg,#000093 27.27deg,#00009a 27.76deg,#0000a2 28.24deg,#0000a9 28.73deg,#0000b1 29.22deg,#0000ba 29.70deg,#0000c2 30.19deg,#0000cb 30.68deg,#0000d4 31.16deg,#0000de 31.65deg,#0000e8 32.14deg,#0000f2 32.62deg,#0000fd 33.11deg,#0000ff 33.60deg,#0000ff 34.09deg,#0000ff 34.57deg,#0000ff 35.06deg);background-color:#ff0000"></div>
<div class="ly sb" style="clip-path:polygon(139.9px 90.8px,58.6px 101.5px,36.8px 6.9px,147.9px 22px);background:conic-gradient(from 345.31deg at 111.7px 328px,#000000 0.00deg,#000000 0.32deg,#000000 0.64deg,#000000 0.96deg,#000000 1.28deg,#000000 1.60deg,#000000 1.91deg,#000000 2.23deg,#010000 2.55deg,#010000 2.87deg,#020000 3.19deg,#030000 3.51deg,#030000 3.83deg,#040000 4.15deg,#050000 4.47deg,#070000 4.79deg,#080000 5.10deg,#090000 5.42deg,#0b0000 5.74deg,#0c0000 6.06deg,#0e0000 6.38deg,#100000 6.70deg,#120000 7.02deg,#140000 7.34deg,#160000 7.66deg,#180000 7.98deg,#1b0000 8.30deg,#1d0000 8.61deg,#200000 8.93deg,#230000 9.25deg,#250000 9.57deg,#280000 9.89deg,#2c0000 10.21deg,#2f0000 10.53deg,#320000 10.85deg,#360000 11.17deg,#390000 11.49deg,#3d0000 11.81deg,#410000 12.12deg,#450000 12.44deg,#490000 12.76deg,#4e0000 13.08deg,#520000 13.40deg,#570000 13.72deg,#5c0000 14.04deg,#610000 14.36deg,#660000 14.68deg,#6b0000 15.00deg,#710000 15.31deg,#760000 15.63deg,#7c0000 15.95deg,#820000 16.27deg,#890000 16.59deg,#8f0000 16.91deg,#960000 17.23deg,#9d0000 17.55deg,#a40000 17.87deg,#ab0000 18.19deg,#b30000 18.51deg,#ba0000 18.82deg,#c20000 19.14deg,#cb0000 19.46deg,#d30000 19.78deg,#dc0000 20.10deg,#e50000 20.42deg,#ee0000 20.74deg,#f80000 21.06deg,#ff0000 21.38deg,#ff0000 21.70deg,#ff0000 22.01deg,#ff0000 22.33deg,#ff0000 22.65deg,#ff0000 22.97deg),conic-gradient(from 260.86deg at 394.9px 56.6px,#0000ff 0.00deg,#0000ff 0.26deg,#0000ff 0.52deg,#0000ff 0.78deg,#0000ff 1.03deg,#0000ff 1.29deg,#0000ff 1.55deg,#0000fa 1.81deg,#0000f0 2.07deg,#0000e7 2.33deg,#0000dd 2.58deg,#0000d4 2.84deg,#0000cc 3.10deg,#0000c3 3.36deg,#0000bb 3.62deg,#0000b3 3.88deg,#0000ab 4.13deg,#0000a4 4.39deg,#00009c 4.65deg,#000095 4.91deg,#00008e 5.17deg,#000088 5.43deg,#000081 5.68deg,#00007b 5.94deg,#000075 6.20deg,#00006f 6.46deg,#000069 6.72deg,#000064 6.98deg,#00005f 7.23deg,#00005a 7.49deg,#000055 7.75deg,#000050 8.01deg,#00004b 8.27deg,#000047 8.53deg,#000042 8.79deg,#00003e 9.04deg,#00003a 9.30deg,#000036 9.56deg,#000033 9.82deg,#00002f 10.08deg,#00002c 10.34deg,#000029 10.59deg,#000025 10.85deg,#000022 11.11deg,#000020 11.37deg,#00001d 11.63deg,#00001a 11.89deg,#000018 12.14deg,#000015 12.40deg,#000013 12.66deg,#000011 12.92deg,#00000f 13.18deg,#00000d 13.44deg,#00000b 13.69deg,#00000a 13.95deg,#000008 14.21deg,#000007 14.47deg,#000006 14.73deg,#000005 14.99deg,#000003 15.24deg,#000003 15.50deg,#000002 15.76deg,#000001 16.02deg,#000001 16.28deg,#000000 16.54deg,#000000 16.80deg,#000000 17.05deg,#000000 17.31deg,#000000 17.57deg,#000000 17.83deg,#000000 18.09deg,#000000 18.35deg,#000000 18.60deg);background-color:#00ff00"></div>
<div class="ly sb" style="clip-path:polygon(139.5px 89.3px,259.9px 187.1px,111.3px 329.5px,58.3px 99.9px);background:conic-gradient(from 127.22deg at 37.9px 7.8px,#ff0000 0.00deg,#ff0000 0.58deg,#ff0000 1.16deg,#ff0000 1.74deg,#f50000 2.32deg,#e80000 2.90deg,#dd0000 3.48deg,#d20000 4.06deg,#c70000 4.64deg,#bd0000 5.22deg,#b40000 5.80deg,#ab0000 6.38deg,#a20000 6.96deg,#9a0000 7.54deg,#920000 8.12deg,#8b0000 8.70deg,#840000 9.28deg,#7d0000 9.86deg,#770000 10.44deg,#700000 11.02deg,#6b0000 11.60deg,#650000 12.18deg,#600000 12.76deg,#5b0000 13.34deg,#560000 13.92deg,#510000 14.50deg,#4d0000 15.08deg,#480000 15.66deg,#440000 16.24deg,#410000 16.83deg,#3d0000 17.41deg,#390000 17.99deg,#360000 18.57deg,#330000 19.15deg,#300000 19.73deg,#2d0000 20.31deg,#2a0000 20.89deg,#270000 21.47deg,#240000 22.05deg,#220000 22.63deg,#200000 23.21deg,#1d0000 23.79deg,#1b0000 24.37deg,#190000 24.95deg,#170000 25.53deg,#150000 26.11deg,#140000 26.69deg,#120000 27.27deg,#100000 27.85deg,#0f0000 28.43deg,#0d0000 29.01deg,#0c0000 29.59deg,#0b0000 30.17deg,#0a0000 30.75deg,#080000 31.33deg,#070000 31.91deg,#060000 32.49deg,#050000 33.07deg,#050000 33.65deg,#040000 34.23deg,#030000 34.81deg,#030000 35.39deg,#020000 35.97deg,#010000 36.55deg,#010000 37.13deg,#010000 37.71deg,#000000 38.29deg,#000000 38.87deg,#000000 39.45deg,#000000 40.03deg,#000000 40.61deg,#000000 41.19deg,#000000 41.77deg),conic-gradient(from 224.48deg at 394.9px 56.6px,#000000 0.00deg,#000000 0.55deg,#000000 1.10deg,#000000 1.66deg,#000000 2.21deg,#000000 2.76deg,#000000 3.31deg,#000000 3.86deg,#000000 4.42deg,#000100 4.97deg,#000100 5.52deg,#000100 6.07deg,#000100 6.62deg,#000200 7.18deg,#000200 7.73deg,#000300 8.28deg,#000300 8.83deg,#000300 9.38deg,#000400 9.94deg,#000400 10.49deg,#000500 11.04deg,#000600 11.59deg,#000600 12.14deg,#000700 12.69deg,#000800 13.25deg,#000900 13.80deg,#000a00 14.35deg,#000b00 14.90deg,#000c00 15.45deg,#000d00 16.01deg,#000e00 16.56deg,#000f00 17.11deg,#001000 17.66deg,#001200 18.21deg,#001300 18.77deg,#001500 19.32deg,#001700 19.87deg,#001800 20.42deg,#001a00 20.97deg,#001c00 21.53deg,#001f00 22.08deg,#002100 22.63deg,#002300 23.18deg,#002600 23.73deg,#002900 24.29deg,#002c00 24.84deg,#002f00 25.39deg,#003200 25.94deg,#003600 26.49deg,#003a00 27.05deg,#003e00 27.60deg,#004300 28.15deg,#004700 28.70deg,#004d00 29.25deg,#005200 29.81deg,#005800 30.36deg,#005f00 30.91deg,#006600 31.46deg,#006d00 32.01deg,#007500 32.57deg,#007e00 33.12deg,#008800 33.67deg,#009300 34.22deg,#009e00 34.77deg,#00ab00 35.32deg,#00b900 35.88deg,#00c800 36.43deg,#00d900 36.98deg,#00eb00 37.53deg,#00ff00 38.08deg,#00ff00 38.64deg,#00ff00 39.19deg,#00ff00 39.74deg);background-color:#0000ff"></div>
</div>
<div class="t" style="left:1253.0px;top:11.2px;font-size:12.5px;color:#d8d8d8;font-weight:normal;transform:translateX(-50%) scaleX(0.94);transform-origin:center;">CIE 1976 u'v'</div>
<svg class="ov" width="1600" height="758" viewBox="0 0 1600 758">
<rect x="562.5" y="26.0" width="433.5" height="418.0" fill="none" stroke="#a4a4a4" stroke-width="1.3"/>
<rect x="1054.0" y="26.0" width="427.0" height="418.0" fill="none" stroke="#a4a4a4" stroke-width="1.3"/>
<line x1="562.2" y1="444" x2="562.2" y2="449" stroke="#e0e0e0" stroke-width="1.2"/>
<line x1="621.1" y1="444" x2="621.1" y2="449" stroke="#e0e0e0" stroke-width="1.2"/>
<line x1="680.0" y1="444" x2="680.0" y2="449" stroke="#e0e0e0" stroke-width="1.2"/>
<line x1="738.8" y1="444" x2="738.8" y2="449" stroke="#e0e0e0" stroke-width="1.2"/>
<line x1="797.7" y1="444" x2="797.7" y2="449" stroke="#e0e0e0" stroke-width="1.2"/>
<line x1="856.6" y1="444" x2="856.6" y2="449" stroke="#e0e0e0" stroke-width="1.2"/>
<line x1="915.5" y1="444" x2="915.5" y2="449" stroke="#e0e0e0" stroke-width="1.2"/>
<line x1="974.4" y1="444" x2="974.4" y2="449" stroke="#e0e0e0" stroke-width="1.2"/>
<line x1="557" y1="443.8" x2="562" y2="443.8" stroke="#e0e0e0" stroke-width="1.2"/>
<line x1="557" y1="394.1" x2="562" y2="394.1" stroke="#e0e0e0" stroke-width="1.2"/>
<line x1="557" y1="344.4" x2="562" y2="344.4" stroke="#e0e0e0" stroke-width="1.2"/>
<line x1="557" y1="294.7" x2="562" y2="294.7" stroke="#e0e0e0" stroke-width="1.2"/>
<line x1="557" y1="245.0" x2="562" y2="245.0" stroke="#e0e0e0" stroke-width="1.2"/>
<line x1="557" y1="195.4" x2="562" y2="195.4" stroke="#e0e0e0" stroke-width="1.2"/>
<line x1="557" y1="145.7" x2="562" y2="145.7" stroke="#e0e0e0" stroke-width="1.2"/>
<line x1="557" y1="96.0" x2="562" y2="96.0" stroke="#e0e0e0" stroke-width="1.2"/>
<line x1="557" y1="46.3" x2="562" y2="46.3" stroke="#e0e0e0" stroke-width="1.2"/>
<line x1="1053.2" y1="444" x2="1053.2" y2="449" stroke="#e0e0e0" stroke-width="1.2"/>
<line x1="1124.5" y1="444" x2="1124.5" y2="449" stroke="#e0e0e0" stroke-width="1.2"/>
<line x1="1195.8" y1="444" x2="1195.8" y2="449" stroke="#e0e0e0" stroke-width="1.2"/>
<line x1="1267.0" y1="444" x2="1267.0" y2="449" stroke="#e0e0e0" stroke-width="1.2"/>
<line x1="1338.3" y1="444" x2="1338.3" y2="449" stroke="#e0e0e0" stroke-width="1.2"/>
<line x1="1409.6" y1="444" x2="1409.6" y2="449" stroke="#e0e0e0" stroke-width="1.2"/>
<line x1="1048.5" y1="443.7" x2="1053.5" y2="443.7" stroke="#e0e0e0" stroke-width="1.2"/>
<line x1="1048.5" y1="408.9" x2="1053.5" y2="408.9" stroke="#e0e0e0" stroke-width="1.2"/>
<line x1="1048.5" y1="374.1" x2="1053.5" y2="374.1" stroke="#e0e0e0" stroke-width="1.2"/>
<line x1="1048.5" y1="339.4" x2="1053.5" y2="339.4" stroke="#e0e0e0" stroke-width="1.2"/>
<line x1="1048.5" y1="304.6" x2="1053.5" y2="304.6" stroke="#e0e0e0" stroke-width="1.2"/>
<line x1="1048.5" y1="269.8" x2="1053.5" y2="269.8" stroke="#e0e0e0" stroke-width="1.2"/>
<line x1="1048.5" y1="235.0" x2="1053.5" y2="235.0" stroke="#e0e0e0" stroke-width="1.2"/>
<line x1="1048.5" y1="200.2" x2="1053.5" y2="200.2" stroke="#e0e0e0" stroke-width="1.2"/>
<line x1="1048.5" y1="165.5" x2="1053.5" y2="165.5" stroke="#e0e0e0" stroke-width="1.2"/>
<line x1="1048.5" y1="130.7" x2="1053.5" y2="130.7" stroke="#e0e0e0" stroke-width="1.2"/>
<line x1="1048.5" y1="95.9" x2="1053.5" y2="95.9" stroke="#e0e0e0" stroke-width="1.2"/>
<line x1="1048.5" y1="61.1" x2="1053.5" y2="61.1" stroke="#e0e0e0" stroke-width="1.2"/>
<rect x="740.6" y="273.4" width="11.4" height="11.4" fill="#fff" stroke="#000" stroke-width="1.7"/>
<rect x="973.4" y="291.7" width="11.4" height="11.4" fill="none" stroke="#fff" stroke-width="1.7"/>
<rect x="656.6" y="41.1" width="11.4" height="11.4" fill="none" stroke="#fff" stroke-width="1.7"/>
<rect x="633.6" y="413.8" width="11.4" height="11.4" fill="none" stroke="#fff" stroke-width="1.7"/>
<rect x="642.8" y="265.6" width="11.4" height="11.4" fill="none" stroke="#fff" stroke-width="1.7"/>
<rect x="773.3" y="363.6" width="11.4" height="11.4" fill="none" stroke="#fff" stroke-width="1.7"/>
<rect x="819.4" y="169.9" width="11.4" height="11.4" fill="none" stroke="#fff" stroke-width="1.7"/>
<circle cx="749.4" cy="277.5" r="3.7" fill="#fff" stroke="#000" stroke-width="1.2"/>
<circle cx="962.2" cy="284.5" r="3.7" fill="#f00" stroke="#000" stroke-width="1.2"/>
<circle cx="717.0" cy="104.5" r="3.7" fill="#0f0" stroke="#000" stroke-width="1.2"/>
<circle cx="648.5" cy="417.4" r="3.7" fill="#00f" stroke="#000" stroke-width="1.2"/>
<circle cx="679.7" cy="275.1" r="3.7" fill="#0ff" stroke="#000" stroke-width="1.2"/>
<circle cx="762.6" cy="369.2" r="3.7" fill="#f0f" stroke="#000" stroke-width="1.2"/>
<circle cx="820.0" cy="180.0" r="3.7" fill="#ff0" stroke="#000" stroke-width="1.2"/>
<rect x="1188.5" y="111.3" width="11.4" height="11.4" fill="#fff" stroke="#000" stroke-width="1.7"/>
<rect x="1444.2" y="77.8" width="11.4" height="11.4" fill="none" stroke="#fff" stroke-width="1.7"/>
<rect x="1087.2" y="29.0" width="11.4" height="11.4" fill="none" stroke="#fff" stroke-width="1.7"/>
<rect x="1161.0" y="349.2" width="11.4" height="11.4" fill="none" stroke="#fff" stroke-width="1.7"/>
<rect x="1108.5" y="121.8" width="11.4" height="11.4" fill="none" stroke="#fff" stroke-width="1.7"/>
<rect x="1308.1" y="208.3" width="11.4" height="11.4" fill="none" stroke="#fff" stroke-width="1.7"/>
<rect x="1196.3" y="43.9" width="11.4" height="11.4" fill="none" stroke="#fff" stroke-width="1.7"/>
<circle cx="1195.6" cy="115.5" r="3.7" fill="#fff" stroke="#000" stroke-width="1.2"/>
<circle cx="1406.9" cy="78.2" r="3.7" fill="#f00" stroke="#000" stroke-width="1.2"/>
<circle cx="1123.5" cy="43.0" r="3.7" fill="#0f0" stroke="#000" stroke-width="1.2"/>
<circle cx="1178.9" cy="346.2" r="3.7" fill="#00f" stroke="#000" stroke-width="1.2"/>
<circle cx="1138.6" cy="125.4" r="3.7" fill="#0ff" stroke="#000" stroke-width="1.2"/>
<circle cx="1289.6" cy="216.4" r="3.7" fill="#f0f" stroke="#000" stroke-width="1.2"/>
<circle cx="1200.3" cy="52.5" r="3.7" fill="#ff0" stroke="#000" stroke-width="1.2"/>
</svg>
<div class="t" style="left:562.2px;top:451.4px;font-size:12.5px;color:#e8e8e8;font-weight:normal;transform:translateX(-50%);">0</div>
<div class="t" style="left:621.1px;top:451.4px;font-size:12.5px;color:#e8e8e8;font-weight:normal;transform:translateX(-50%);">0,1</div>
<div class="t" style="left:680.0px;top:451.4px;font-size:12.5px;color:#e8e8e8;font-weight:normal;transform:translateX(-50%);">0,2</div>
<div class="t" style="left:738.8px;top:451.4px;font-size:12.5px;color:#e8e8e8;font-weight:normal;transform:translateX(-50%);">0,3</div>
<div class="t" style="left:797.7px;top:451.4px;font-size:12.5px;color:#e8e8e8;font-weight:normal;transform:translateX(-50%);">0,4</div>
<div class="t" style="left:856.6px;top:451.4px;font-size:12.5px;color:#e8e8e8;font-weight:normal;transform:translateX(-50%);">0,5</div>
<div class="t" style="left:915.5px;top:451.4px;font-size:12.5px;color:#e8e8e8;font-weight:normal;transform:translateX(-50%);">0,6</div>
<div class="t" style="left:974.4px;top:451.4px;font-size:12.5px;color:#e8e8e8;font-weight:normal;transform:translateX(-50%);">0,7</div>
<div class="t" style="right:1043.0px;top:438.6px;font-size:12.5px;color:#e8e8e8;font-weight:normal;">0</div>
<div class="t" style="right:1043.0px;top:388.9px;font-size:12.5px;color:#e8e8e8;font-weight:normal;">0,1</div>
<div class="t" style="right:1043.0px;top:339.2px;font-size:12.5px;color:#e8e8e8;font-weight:normal;">0,2</div>
<div class="t" style="right:1043.0px;top:289.5px;font-size:12.5px;color:#e8e8e8;font-weight:normal;">0,3</div>
<div class="t" style="right:1043.0px;top:239.9px;font-size:12.5px;color:#e8e8e8;font-weight:normal;">0,4</div>
<div class="t" style="right:1043.0px;top:190.2px;font-size:12.5px;color:#e8e8e8;font-weight:normal;">0,5</div>
<div class="t" style="right:1043.0px;top:140.5px;font-size:12.5px;color:#e8e8e8;font-weight:normal;">0,6</div>
<div class="t" style="right:1043.0px;top:90.8px;font-size:12.5px;color:#e8e8e8;font-weight:normal;">0,7</div>
<div class="t" style="right:1043.0px;top:41.1px;font-size:12.5px;color:#e8e8e8;font-weight:normal;">0,8</div>
<div class="t" style="left:1053.2px;top:451.4px;font-size:12.5px;color:#e8e8e8;font-weight:normal;transform:translateX(-50%);">0</div>
<div class="t" style="left:1124.5px;top:451.4px;font-size:12.5px;color:#e8e8e8;font-weight:normal;transform:translateX(-50%);">0,1</div>
<div class="t" style="left:1195.8px;top:451.4px;font-size:12.5px;color:#e8e8e8;font-weight:normal;transform:translateX(-50%);">0,2</div>
<div class="t" style="left:1267.0px;top:451.4px;font-size:12.5px;color:#e8e8e8;font-weight:normal;transform:translateX(-50%);">0,3</div>
<div class="t" style="left:1338.3px;top:451.4px;font-size:12.5px;color:#e8e8e8;font-weight:normal;transform:translateX(-50%);">0,4</div>
<div class="t" style="left:1409.6px;top:451.4px;font-size:12.5px;color:#e8e8e8;font-weight:normal;transform:translateX(-50%);">0,5</div>
<div class="t" style="right:551.5px;top:438.5px;font-size:12.5px;color:#e8e8e8;font-weight:normal;">0</div>
<div class="t" style="right:551.5px;top:403.7px;font-size:12.5px;color:#e8e8e8;font-weight:normal;">0,05</div>
<div class="t" style="right:551.5px;top:369.0px;font-size:12.5px;color:#e8e8e8;font-weight:normal;">0,1</div>
<div class="t" style="right:551.5px;top:334.2px;font-size:12.5px;color:#e8e8e8;font-weight:normal;">0,15</div>
<div class="t" style="right:551.5px;top:299.4px;font-size:12.5px;color:#e8e8e8;font-weight:normal;">0,2</div>
<div class="t" style="right:551.5px;top:264.6px;font-size:12.5px;color:#e8e8e8;font-weight:normal;">0,25</div>
<div class="t" style="right:551.5px;top:229.8px;font-size:12.5px;color:#e8e8e8;font-weight:normal;">0,3</div>
<div class="t" style="right:551.5px;top:195.1px;font-size:12.5px;color:#e8e8e8;font-weight:normal;">0,35</div>
<div class="t" style="right:551.5px;top:160.3px;font-size:12.5px;color:#e8e8e8;font-weight:normal;">0,4</div>
<div class="t" style="right:551.5px;top:125.5px;font-size:12.5px;color:#e8e8e8;font-weight:normal;">0,45</div>
<div class="t" style="right:551.5px;top:90.7px;font-size:12.5px;color:#e8e8e8;font-weight:normal;">0,5</div>
<div class="t" style="right:551.5px;top:55.9px;font-size:12.5px;color:#e8e8e8;font-weight:normal;">0,55</div>
<div class="t" style="left:104.5px;top:23.1px;font-size:30.5px;color:#fff;font-weight:normal;transform:scaleX(0.944);transform-origin:left;">HDR BT.2020&nbsp; Gamut Coverage</div>
<div class="btn"></div>
<div class="t" style="left:173.0px;top:432.1px;font-size:23.5px;color:#f4f4f4;font-weight:normal;transform:scaleX(0.99);transform-origin:left;">Measure Gamut Coverage</div>
<div class="t" style="left:138.5px;top:545.1px;font-size:33.6px;color:#fff;font-weight:normal;transform:scaleX(1.0);transform-origin:left;">BT.2020 Percent 1931 xy: 71,97</div>
<div class="t" style="left:138.5px;top:614.3px;font-size:33.6px;color:#fff;font-weight:normal;transform:scaleX(1.006);transform-origin:left;">BT.2020 Percent 1976 uv: 75,87</div>
<div class="tbl"></div>
<div class="thead"></div>
<div class="t" style="left:837.5px;top:509.4px;font-size:13px;color:#f0f0f0;font-weight:normal;transform:translateX(-50%);">White</div>
<div class="t" style="left:900.0px;top:509.4px;font-size:13px;color:#f0f0f0;font-weight:normal;transform:translateX(-50%);">Red</div>
<div class="t" style="left:962.0px;top:509.4px;font-size:13px;color:#f0f0f0;font-weight:normal;transform:translateX(-50%);">Green</div>
<div class="t" style="left:1020.4px;top:509.4px;font-size:13px;color:#f0f0f0;font-weight:normal;transform:translateX(-50%);">Blue</div>
<div class="t" style="left:1079.0px;top:509.4px;font-size:13px;color:#f0f0f0;font-weight:normal;transform:translateX(-50%);">Cyan</div>
<div class="t" style="left:1141.0px;top:509.4px;font-size:13px;color:#f0f0f0;font-weight:normal;transform:translateX(-50%);">Magenta</div>
<div class="t" style="left:1203.0px;top:509.4px;font-size:13px;color:#f0f0f0;font-weight:normal;transform:translateX(-50%);">Yellow</div>
<div class="t" style="left:1265.6px;top:509.4px;font-size:13px;color:#f0f0f0;font-weight:normal;transform:translateX(-50%);">100W</div>
<div class="row" style="top:527.6px;height:21.9px;background:#3c3c3c"></div>
<div class="t" style="left:699.5px;top:531.7px;font-size:14px;color:#fff;font-weight:bold;">Target Y cd/m&sup2;</div>
<div class="t" style="left:810.0px;top:531.7px;font-size:14px;color:#f0f0f0;font-weight:normal;transform:scaleX(0.95);transform-origin:left;">786,4032</div>
<div class="t" style="left:872.0px;top:531.7px;font-size:14px;color:#f0f0f0;font-weight:normal;transform:scaleX(0.95);transform-origin:left;">206,5968</div>
<div class="t" style="left:934.4px;top:531.7px;font-size:14px;color:#f0f0f0;font-weight:normal;transform:scaleX(0.95);transform-origin:left;">533,1752</div>
<div class="t" style="left:996.0px;top:531.7px;font-size:14px;color:#f0f0f0;font-weight:normal;transform:scaleX(0.95);transform-origin:left;">46,6312</div>
<div class="t" style="left:1051.2px;top:531.7px;font-size:14px;color:#f0f0f0;font-weight:normal;transform:scaleX(0.95);transform-origin:left;">579,8064</div>
<div class="t" style="left:1114.0px;top:531.7px;font-size:14px;color:#f0f0f0;font-weight:normal;transform:scaleX(0.95);transform-origin:left;">253,2280</div>
<div class="t" style="left:1176.0px;top:531.7px;font-size:14px;color:#f0f0f0;font-weight:normal;transform:scaleX(0.95);transform-origin:left;">739,7720</div>
<div class="t" style="left:1238.0px;top:531.7px;font-size:14px;color:#f0f0f0;font-weight:normal;transform:scaleX(0.95);transform-origin:left;">786,4032</div>
<div class="row" style="top:549.5px;height:22.0px;background:#7e7e7e"></div>
<div class="t" style="left:699.5px;top:553.6px;font-size:14px;color:#fff;font-weight:bold;">Y cd/m&sup2;</div>
<div class="t" style="left:810.0px;top:553.6px;font-size:14px;color:#f0f0f0;font-weight:normal;transform:scaleX(0.95);transform-origin:left;">786,4032</div>
<div class="t" style="left:872.0px;top:553.6px;font-size:14px;color:#f0f0f0;font-weight:normal;transform:scaleX(0.95);transform-origin:left;">95,4011</div>
<div class="t" style="left:934.4px;top:553.6px;font-size:14px;color:#f0f0f0;font-weight:normal;transform:scaleX(0.95);transform-origin:left;">294,6614</div>
<div class="t" style="left:996.0px;top:553.6px;font-size:14px;color:#f0f0f0;font-weight:normal;transform:scaleX(0.95);transform-origin:left;">33,2343</div>
<div class="t" style="left:1051.2px;top:553.6px;font-size:14px;color:#f0f0f0;font-weight:normal;transform:scaleX(0.95);transform-origin:left;">319,2575</div>
<div class="t" style="left:1114.0px;top:553.6px;font-size:14px;color:#f0f0f0;font-weight:normal;transform:scaleX(0.95);transform-origin:left;">121,6531</div>
<div class="t" style="left:1176.0px;top:553.6px;font-size:14px;color:#f0f0f0;font-weight:normal;transform:scaleX(0.95);transform-origin:left;">373,2312</div>
<div class="t" style="left:1238.0px;top:553.6px;font-size:14px;color:#f0f0f0;font-weight:normal;transform:scaleX(0.95);transform-origin:left;">786,4032</div>
<div class="row" style="top:571.5px;height:22.2px;background:#3c3c3c"></div>
<div class="t" style="left:699.5px;top:575.6px;font-size:14px;color:#fff;font-weight:bold;">Target x</div>
<div class="t" style="left:810.0px;top:575.6px;font-size:14px;color:#f0f0f0;font-weight:normal;transform:scaleX(0.95);transform-origin:left;">0,3127</div>
<div class="t" style="left:872.0px;top:575.6px;font-size:14px;color:#f0f0f0;font-weight:normal;transform:scaleX(0.95);transform-origin:left;">0,7080</div>
<div class="t" style="left:934.4px;top:575.6px;font-size:14px;color:#f0f0f0;font-weight:normal;transform:scaleX(0.95);transform-origin:left;">0,1700</div>
<div class="t" style="left:996.0px;top:575.6px;font-size:14px;color:#f0f0f0;font-weight:normal;transform:scaleX(0.95);transform-origin:left;">0,1310</div>
<div class="t" style="left:1051.2px;top:575.6px;font-size:14px;color:#f0f0f0;font-weight:normal;transform:scaleX(0.95);transform-origin:left;">0,1465</div>
<div class="t" style="left:1114.0px;top:575.6px;font-size:14px;color:#f0f0f0;font-weight:normal;transform:scaleX(0.95);transform-origin:left;">0,3682</div>
<div class="t" style="left:1176.0px;top:575.6px;font-size:14px;color:#f0f0f0;font-weight:normal;transform:scaleX(0.95);transform-origin:left;">0,4465</div>
<div class="t" style="left:1238.0px;top:575.6px;font-size:14px;color:#f0f0f0;font-weight:normal;transform:scaleX(0.95);transform-origin:left;">0,3127</div>
<div class="row" style="top:593.7px;height:21.9px;background:#7e7e7e"></div>
<div class="t" style="left:699.5px;top:597.8px;font-size:14px;color:#fff;font-weight:bold;">Target y</div>
<div class="t" style="left:810.0px;top:597.8px;font-size:14px;color:#f0f0f0;font-weight:normal;transform:scaleX(0.95);transform-origin:left;">0,3290</div>
<div class="t" style="left:872.0px;top:597.8px;font-size:14px;color:#f0f0f0;font-weight:normal;transform:scaleX(0.95);transform-origin:left;">0,2920</div>
<div class="t" style="left:934.4px;top:597.8px;font-size:14px;color:#f0f0f0;font-weight:normal;transform:scaleX(0.95);transform-origin:left;">0,7970</div>
<div class="t" style="left:996.0px;top:597.8px;font-size:14px;color:#f0f0f0;font-weight:normal;transform:scaleX(0.95);transform-origin:left;">0,0460</div>
<div class="t" style="left:1051.2px;top:597.8px;font-size:14px;color:#f0f0f0;font-weight:normal;transform:scaleX(0.95);transform-origin:left;">0,3446</div>
<div class="t" style="left:1114.0px;top:597.8px;font-size:14px;color:#f0f0f0;font-weight:normal;transform:scaleX(0.95);transform-origin:left;">0,1471</div>
<div class="t" style="left:1176.0px;top:597.8px;font-size:14px;color:#f0f0f0;font-weight:normal;transform:scaleX(0.95);transform-origin:left;">0,5374</div>
<div class="t" style="left:1238.0px;top:597.8px;font-size:14px;color:#f0f0f0;font-weight:normal;transform:scaleX(0.95);transform-origin:left;">0,3290</div>
<div class="row" style="top:615.6px;height:21.9px;background:#3c3c3c"></div>
<div class="t" style="left:699.5px;top:619.7px;font-size:14px;color:#fff;font-weight:bold;">x</div>
<div class="t" style="left:810.0px;top:619.7px;font-size:14px;color:#f0f0f0;font-weight:normal;transform:scaleX(0.95);transform-origin:left;">0,3180</div>
<div class="t" style="left:872.0px;top:619.7px;font-size:14px;color:#f0f0f0;font-weight:normal;transform:scaleX(0.95);transform-origin:left;">0,6793</div>
<div class="t" style="left:934.4px;top:619.7px;font-size:14px;color:#f0f0f0;font-weight:normal;transform:scaleX(0.95);transform-origin:left;">0,2629</div>
<div class="t" style="left:996.0px;top:619.7px;font-size:14px;color:#f0f0f0;font-weight:normal;transform:scaleX(0.95);transform-origin:left;">0,1466</div>
<div class="t" style="left:1051.2px;top:619.7px;font-size:14px;color:#f0f0f0;font-weight:normal;transform:scaleX(0.95);transform-origin:left;">0,1996</div>
<div class="t" style="left:1114.0px;top:619.7px;font-size:14px;color:#f0f0f0;font-weight:normal;transform:scaleX(0.95);transform-origin:left;">0,3404</div>
<div class="t" style="left:1176.0px;top:619.7px;font-size:14px;color:#f0f0f0;font-weight:normal;transform:scaleX(0.95);transform-origin:left;">0,4379</div>
<div class="t" style="left:1238.0px;top:619.7px;font-size:14px;color:#f0f0f0;font-weight:normal;transform:scaleX(0.95);transform-origin:left;">0,3180</div>
<div class="row" style="top:637.5px;height:22.0px;background:#7e7e7e"></div>
<div class="t" style="left:699.5px;top:641.6px;font-size:14px;color:#fff;font-weight:bold;">y</div>
<div class="t" style="left:810.0px;top:641.6px;font-size:14px;color:#f0f0f0;font-weight:normal;transform:scaleX(0.95);transform-origin:left;">0,3335</div>
<div class="t" style="left:872.0px;top:641.6px;font-size:14px;color:#f0f0f0;font-weight:normal;transform:scaleX(0.95);transform-origin:left;">0,3195</div>
<div class="t" style="left:934.4px;top:641.6px;font-size:14px;color:#f0f0f0;font-weight:normal;transform:scaleX(0.95);transform-origin:left;">0,6822</div>
<div class="t" style="left:996.0px;top:641.6px;font-size:14px;color:#f0f0f0;font-weight:normal;transform:scaleX(0.95);transform-origin:left;">0,0515</div>
<div class="t" style="left:1051.2px;top:641.6px;font-size:14px;color:#f0f0f0;font-weight:normal;transform:scaleX(0.95);transform-origin:left;">0,3384</div>
<div class="t" style="left:1114.0px;top:641.6px;font-size:14px;color:#f0f0f0;font-weight:normal;transform:scaleX(0.95);transform-origin:left;">0,1488</div>
<div class="t" style="left:1176.0px;top:641.6px;font-size:14px;color:#f0f0f0;font-weight:normal;transform:scaleX(0.95);transform-origin:left;">0,5301</div>
<div class="t" style="left:1238.0px;top:641.6px;font-size:14px;color:#f0f0f0;font-weight:normal;transform:scaleX(0.95);transform-origin:left;">0,3335</div>
<div class="cb" style="left:689px;top:659.5px;width:608px;height:5px;background:#3a3a3a"></div>
<div class="sbar"></div><div class="sthumb"></div>
<div class="sbtn" style="top:529px"></div><div class="sbtn" style="top:651px"></div>
<svg class="ov" width="1600" height="758"><path d="M1300.5 538.5 L1303.5 534.5 L1306.5 538.5 Z" fill="#2a2a2a"/><path d="M1300.5 654.5 L1303.5 658.5 L1306.5 654.5 Z" fill="#2a2a2a"/></svg>
<div class="tile sel" style="left:2.0px"><div class="sw" style="background:#ffffff"></div></div>
<div class="t" style="left:79.0px;top:742.7px;font-size:11px;color:#fff;font-weight:bold;transform:translateX(-50%);">White</div>
<div class="tile" style="left:159.6px"><div class="sw" style="background:#ff0000"></div></div>
<div class="t" style="left:236.6px;top:742.7px;font-size:11px;color:#2c2c2c;font-weight:bold;transform:translateX(-50%);">Red</div>
<div class="tile" style="left:317.2px"><div class="sw" style="background:#00ff00"></div></div>
<div class="t" style="left:394.2px;top:742.7px;font-size:11px;color:#2c2c2c;font-weight:bold;transform:translateX(-50%);">Green</div>
<div class="tile" style="left:474.8px"><div class="sw" style="background:#0000ff"></div></div>
<div class="t" style="left:551.8px;top:742.7px;font-size:11px;color:#2c2c2c;font-weight:bold;transform:translateX(-50%);">Blue</div>
<div class="tile" style="left:632.4px"><div class="sw" style="background:#00ffff"></div></div>
<div class="t" style="left:709.4px;top:742.7px;font-size:11px;color:#2c2c2c;font-weight:bold;transform:translateX(-50%);">Cyan</div>
<div class="tile" style="left:790.0px"><div class="sw" style="background:#ff00ff"></div></div>
<div class="t" style="left:867.0px;top:742.7px;font-size:11px;color:#2c2c2c;font-weight:bold;transform:translateX(-50%);">Magenta</div>
<div class="tile" style="left:947.6px"><div class="sw" style="background:#ffff00"></div></div>
<div class="t" style="left:1024.6px;top:742.7px;font-size:11px;color:#2c2c2c;font-weight:bold;transform:translateX(-50%);">Yellow</div>
<div class="tile" style="left:1105.2px"><div class="sw" style="background:linear-gradient(#a8a8a8 0,#e8e8e8 2px,#fff 3px)"></div></div>
<div class="t" style="left:1182.2px;top:742.7px;font-size:11px;color:#2c2c2c;font-weight:bold;transform:translateX(-50%);">100W</div>

<div class="cbg" style="left:1261px;top:690px;width:339px;height:68px;background:#2a2a2a"></div>
<div class="cb" style="left:1263.5px;top:693.5px;width:49.5px;height:18.5px;border-radius:3px 3px 0 0;background:linear-gradient(#a4a4a4,#8a8a8a)"></div>
<div class="cb" style="left:1263.5px;top:713px;width:49.5px;height:45px;background:linear-gradient(#9a9a9a,#7c7c7c)"></div>
<div class="cb" style="left:1315px;top:693px;width:47.5px;height:31px;background:linear-gradient(#a8a8a8,#6e6e6e)"></div>
<div class="cb" style="left:1363.5px;top:693px;width:46px;height:31px;background:linear-gradient(#a8a8a8,#6e6e6e)"></div>
<div class="cb" style="left:1410.5px;top:693px;width:45.5px;height:31px;background:linear-gradient(#a8a8a8,#6e6e6e)"></div>
<div class="cb" style="left:1457.5px;top:693px;width:45.7px;height:31px;background:linear-gradient(#a8a8a8,#6e6e6e)"></div>
<div class="cb" style="left:1503.2px;top:693px;width:46.9px;height:31px;background:linear-gradient(#3c3c3c,#2e2e2e)"></div>
<div class="cb" style="left:1550.1px;top:693px;width:46.9px;height:31px;background:linear-gradient(#a8a8a8,#6e6e6e)"></div>
<div class="cb" style="left:1315px;top:726px;width:141px;height:32px;background:linear-gradient(#b4b4b4 0,#9c9c9c 8%,#888 50%,#6c6c6c 100%)"></div>
<div class="cb" style="left:1457.5px;top:726px;width:139.5px;height:32px;background:linear-gradient(#b4b4b4 0,#9c9c9c 8%,#888 50%,#6c6c6c 100%)"></div>
<div class="cb" style="left:1597px;top:690px;width:3px;height:68px;background:#1a1a1a"></div>
<svg class="ov" width="1600" height="758" viewBox="0 0 1600 758">
 <defs>
  <linearGradient id="cg" x1="0" y1="0" x2="0" y2="1"><stop offset="0" stop-color="#7a7a7a"/><stop offset="1" stop-color="#b0b0b0"/></linearGradient>
  <linearGradient id="cgd" x1="0" y1="0" x2="0" y2="1"><stop offset="0" stop-color="#252525"/><stop offset="1" stop-color="#3e3e3e"/></linearGradient>
 </defs>
 <circle cx="1288.6" cy="701" r="7" fill="url(#cg)"/>
 <path d="M1284.8 704 L1288.6 698.4 L1292.4 704 Z" fill="#222"/>
 <rect x="1273.5" y="719.5" width="30" height="30" rx="4" fill="#a8a8a8" stroke="#111" stroke-width="2.4"/>
 <rect x="1274.7" y="734.5" width="27.6" height="14" fill="#969696"/>
 <rect x="1281.7" y="727.7" width="14.3" height="14.3" fill="#0c0c0c"/>
 <circle cx="1338.7" cy="708.8" r="10" fill="url(#cg)"/>
 <rect x="1334.7" y="704.8" width="8" height="8" fill="#2a2a2a"/>
 <circle cx="1386.2" cy="708.8" r="10" fill="url(#cg)"/>
 <path d="M1383.3 703.8 L1392 709 L1383.3 714.2 Z" fill="#2a2a2a"/>
 <circle cx="1433.8" cy="709" r="9.5" fill="url(#cg)"/>
 <path d="M1429.7 703.5 h-1.8 v11 h1.8 M1437.9 703.5 h1.8 v11 h-1.8" fill="none" stroke="#2a2a2a" stroke-width="1.8"/>
 <circle cx="1432.3" cy="708.6" r="1" fill="#2a2a2a"/><circle cx="1435.3" cy="708.6" r="1" fill="#2a2a2a"/>
 <circle cx="1480.7" cy="709" r="9.5" fill="url(#cg)"/>
 <path d="M1480.7 708.3 C1478 705 1474.5 705.3 1474.5 708.3 C1474.5 711.3 1478 711.6 1480.7 708.3 C1483.4 705 1486.9 705.3 1486.9 708.3 C1486.9 711.3 1483.4 711.6 1480.7 708.3 Z" fill="none" stroke="#2a2a2a" stroke-width="1.9"/>
 <circle cx="1528" cy="709" r="8.5" fill="url(#cgd)"/>
 <path d="M1522.3 708.3 Q1523.5 704.6 1527.8 704.6 Q1530.6 704.8 1531.8 706.6 M1523.8 711.3 Q1525.5 713.6 1528.2 713.4 Q1531.8 713.2 1532.6 710.4" fill="none" stroke="#151515" stroke-width="2.3" stroke-linecap="round"/>
 <circle cx="1575.1" cy="709" r="9.5" fill="url(#cg)" opacity="0.8"/>
 <circle cx="1347.1" cy="741.1" r="10.5" fill="url(#cg)"/>
 <path d="M1346.5 736.5 L1342.5 741.2 L1346.5 745.8 M1351 736.5 L1347 741.2 L1351 745.8" fill="none" stroke="#2a2a2a" stroke-width="1.6"/>
 <circle cx="1568.3" cy="741.1" r="10.5" fill="url(#cg)"/>
 <path d="M1564.7 736.5 L1568.7 741.2 L1564.7 745.8 M1569.2 736.5 L1573.2 741.2 L1569.2 745.8" fill="none" stroke="#2a2a2a" stroke-width="1.6"/>
</svg>

<div class="t" style="left:1373.0px;top:728.8px;font-size:24.5px;color:#2a2a2a;font-weight:normal;transform:scaleX(1.0);transform-origin:left;-webkit-text-stroke:0.6px #2a2a2a;">Back</div>
<div class="t" style="left:1484.0px;top:728.8px;font-size:24.5px;color:#2a2a2a;font-weight:normal;transform:scaleX(1.09);transform-origin:left;-webkit-text-stroke:0.6px #2a2a2a;">Next</div>
<div class="cb" style="left:0;top:0;width:1600px;height:1px;background:#2a2a2a"></div><div class="cb" style="left:0;top:1px;width:1600px;height:2px;background:#393939"></div>
<div class="cb" style="left:1592px;top:0;width:3px;height:690px;background:#373737"></div><div class="cb" style="left:1595px;top:0;width:2px;height:758px;background:#232323"></div><div class="cb" style="left:1597px;top:0;width:3px;height:758px;background:#1b1b1b"></div>
</body></html>
